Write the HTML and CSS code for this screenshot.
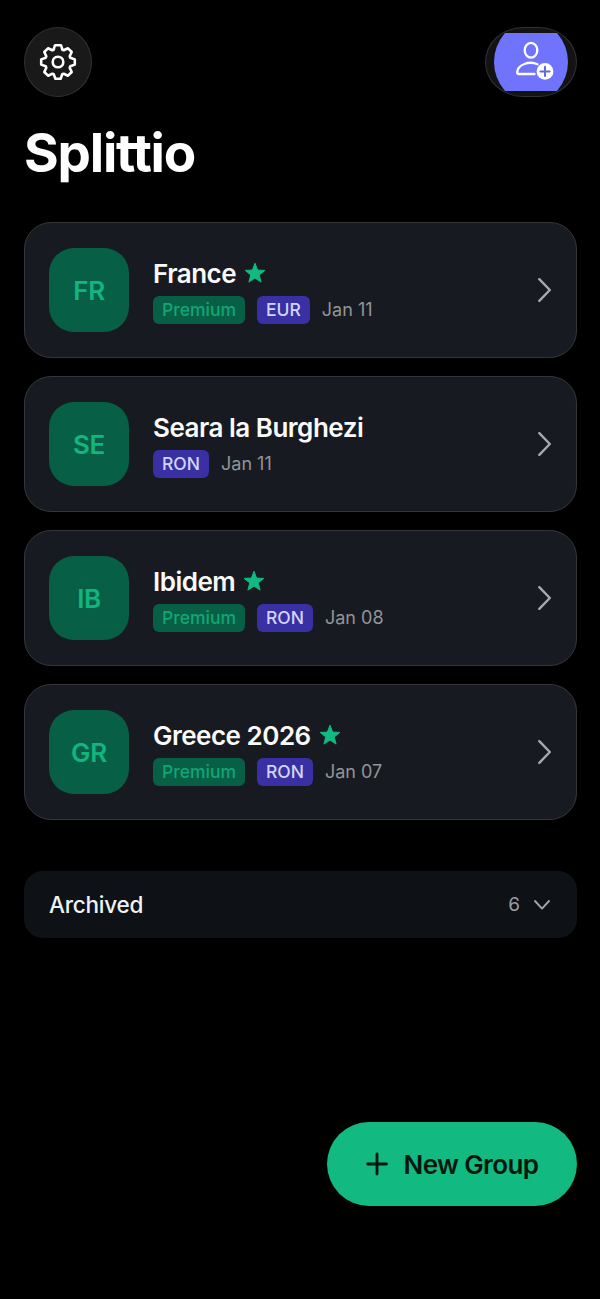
FILE: index.html
```html
<!DOCTYPE html>
<html lang="en">
<head>
    <meta charset="UTF-8">
    <meta name="viewport" content="width=device-width, initial-scale=1.0">
    <title>Splittio</title>
    <link rel="stylesheet" href="styles.css">
</head>
<body>

<svg width="0" height="0" class="symbols">
    <symbol id="star" viewBox="0 0 22 22">
        <path d="M11 1.2 L13.6 8.1 L20.8 8.4 L15.2 13 L17.1 20.1 L11 16.1 L4.9 20.1 L6.8 13 L1.2 8.4 L8.4 8.1 Z" fill="#12b981" stroke="#12b981" stroke-width="1" stroke-linejoin="round"/>
    </symbol>
    <symbol id="chevron" viewBox="0 0 14 26">
        <path d="M1.3 2.2 L11.8 13 L1.3 23.8" fill="none" stroke="#a7a9ad" stroke-width="2.4" stroke-linecap="round" stroke-linejoin="round"/>
    </symbol>
</svg>

<div class="app">
    <header class="toolbar">
        <button class="round-button" aria-label="Settings">
            <svg width="38" height="38" viewBox="-19 -19 38 38" fill="none" stroke="#fff" stroke-width="2.6" stroke-linejoin="round">
                <path d="M-2.6 -16.8 H2.6 Q3.3 -16.8 3.5 -15.5 L4.3 -12.3 L5.7 -11.7 L10 -13.7 L13.7 -10 L11.7 -5.7 L12.3 -4.3 L16.8 -2.6 V2.6 L12.3 4.3 L11.7 5.7 L13.7 10 L10 13.7 L5.7 11.7 L4.3 12.3 L2.6 16.8 H-2.6 L-4.3 12.3 L-5.7 11.7 L-10 13.7 L-13.7 10 L-11.7 5.7 L-12.3 4.3 L-16.8 2.6 V-2.6 L-12.3 -4.3 L-11.7 -5.7 L-13.7 -10 L-10 -13.7 L-5.7 -11.7 L-4.3 -12.3 L-3.5 -15.5 Q-3.3 -16.8 -2.6 -16.8 Z"/>
                <circle r="5.3"/>
            </svg>
        </button>
        <button class="round-button wide" aria-label="Add friend">
            <svg width="74" height="58" viewBox="0 0 74 58">
                <path d="M11 0 H63 Q74 13 74 29 T63 58 H11 Q0 45 0 29 T11 0 Z" fill="#7073fb"/>
                <g fill="none" stroke="#fff" stroke-width="2.3" stroke-linecap="round" stroke-linejoin="round">
                    <ellipse cx="37" cy="17.2" rx="6.3" ry="7.4"/>
                    <path d="M43.5 31.2 C35 27.5 23.7 31.6 23.2 39.2 Q23.2 41 25 41 H40.5"/>
                </g>
                <circle cx="51" cy="38.4" r="8.4" fill="#fff"/>
                <path d="M46.4 38.4 H55.6 M51 33.8 V43" stroke="#6567d8" stroke-width="2" stroke-linecap="round"/>
            </svg>
        </button>
    </header>

    <h1>Splittio</h1>

    <main class="groups">
        <div class="card">
            <div class="avatar">FR</div>
            <div class="info">
                <div class="name"><span>France</span><svg class="star"><use href="#star"/></svg></div>
                <div class="meta">
                    <span class="tag premium">Premium</span>
                    <span class="tag currency">EUR</span>
                    <span class="date">Jan 11</span>
                </div>
            </div>
            <svg class="chevron"><use href="#chevron"/></svg>
        </div>
        <div class="card">
            <div class="avatar">SE</div>
            <div class="info">
                <div class="name"><span>Seara la Burghezi</span></div>
                <div class="meta">
                    <span class="tag currency">RON</span>
                    <span class="date">Jan 11</span>
                </div>
            </div>
            <svg class="chevron"><use href="#chevron"/></svg>
        </div>
        <div class="card">
            <div class="avatar">IB</div>
            <div class="info">
                <div class="name"><span>Ibidem</span><svg class="star"><use href="#star"/></svg></div>
                <div class="meta">
                    <span class="tag premium">Premium</span>
                    <span class="tag currency">RON</span>
                    <span class="date">Jan 08</span>
                </div>
            </div>
            <svg class="chevron"><use href="#chevron"/></svg>
        </div>
        <div class="card">
            <div class="avatar">GR</div>
            <div class="info">
                <div class="name"><span>Greece 2026</span><svg class="star"><use href="#star"/></svg></div>
                <div class="meta">
                    <span class="tag premium">Premium</span>
                    <span class="tag currency">RON</span>
                    <span class="date">Jan 07</span>
                </div>
            </div>
            <svg class="chevron"><use href="#chevron"/></svg>
        </div>
    </main>

    <div class="archived">
        <span class="archived-label">Archived</span>
        <span class="archived-count">6</span>
        <svg width="18" height="12" viewBox="0 0 18 12"><path d="M2 2 L9 9.6 L16 2" fill="none" stroke="#a3a5a8" stroke-width="1.9" stroke-linecap="round" stroke-linejoin="round"/></svg>
    </div>

    <button class="new-group">
        <svg width="22" height="24" viewBox="0 0 22 24"><path d="M1.5 12 H20.5 M11 2 V22" stroke="#04170f" stroke-width="2.8" stroke-linecap="round"/></svg>
        <span>New Group</span>
    </button>
</div>

</body>
</html>
```

FILE: styles.css
```css
* {
    box-sizing: border-box;
}
body {
    margin: 0;
    background-color: #000;
    color: #fff;
    font-family: Inter, "Liberation Sans", sans-serif;
}
button {
    border: none;
    padding: 0;
    font-family: inherit;
}
svg {
    display: block;
    flex-shrink: 0;
}
.symbols {
    display: none;
}
.app {
    display: flex;
    flex-direction: column;
    height: 1299px;
    padding: 27px 23px 0 24px;
}
.toolbar {
    display: flex;
    justify-content: space-between;
}
.round-button {
    display: flex;
    align-items: center;
    justify-content: center;
    width: 68px;
    height: 70px;
    border: 1px solid #333;
    border-radius: 34px / 35px;
    background-color: #191919;
}
.round-button.wide {
    width: 92px;
    border-radius: 38px / 35px;
    background-color: #131313;
}
h1 {
    margin: 24px 0 0;
    height: 64px;
    font-size: 53px;
    font-weight: 700;
    line-height: 64px;
    letter-spacing: -1.2px;
}
.groups {
    display: flex;
    flex-direction: column;
    gap: 18px;
    margin-top: 37px;
}
.card {
    display: flex;
    align-items: center;
    height: 136px;
    padding: 0 24px;
    border: 1.5px solid #34363a;
    border-radius: 27px;
    background-color: #171b21;
}
.avatar {
    display: flex;
    align-items: center;
    justify-content: center;
    width: 80px;
    height: 84px;
    margin-right: 24px;
    border-radius: 25px;
    background-color: #075f45;
    color: #12b57e;
    font-size: 26px;
    font-weight: 600;
    letter-spacing: -0.3px;
}
.info {
    flex: 1;
}
.name {
    display: flex;
    align-items: center;
    gap: 8px;
    height: 34px;
    padding-bottom: 1px;
    color: #fafafa;
    font-size: 26px;
    font-weight: 600;
    letter-spacing: -0.5px;
    white-space: nowrap;
}
.star {
    width: 22px;
    height: 22px;
}
.meta {
    display: flex;
    align-items: center;
    margin-top: 5px;
}
.tag {
    display: flex;
    align-items: center;
    height: 28px;
    margin-right: 12px;
    padding: 0 9px;
    border-radius: 6px;
    font-size: 17.5px;
    font-weight: 500;
}
.premium {
    background-color: #075f45;
    color: #12a674;
}
.currency {
    background-color: #3930a3;
    color: #d3d5fb;
}
.date {
    color: #929498;
    font-size: 18px;
}
.chevron {
    width: 14px;
    height: 26px;
}
.archived {
    display: flex;
    align-items: center;
    height: 67px;
    margin-top: 51px;
    padding: 0 26px 0 25px;
    border-radius: 19px;
    background-color: #0e1216;
}
.archived-label {
    flex: 1;
    color: #f0f2f4;
    font-size: 22.5px;
    font-weight: 500;
    letter-spacing: -0.25px;
}
.archived-count {
    margin-right: 13px;
    color: #9b9da0;
    font-size: 19px;
}
.new-group {
    display: flex;
    align-items: center;
    justify-content: center;
    align-self: flex-end;
    gap: 16px;
    width: 250px;
    height: 84px;
    margin-top: 184px;
    border-radius: 42px;
    background-color: #12b981;
    color: #04170f;
    font-size: 26px;
    font-weight: 600;
    letter-spacing: -0.6px;
}
```
